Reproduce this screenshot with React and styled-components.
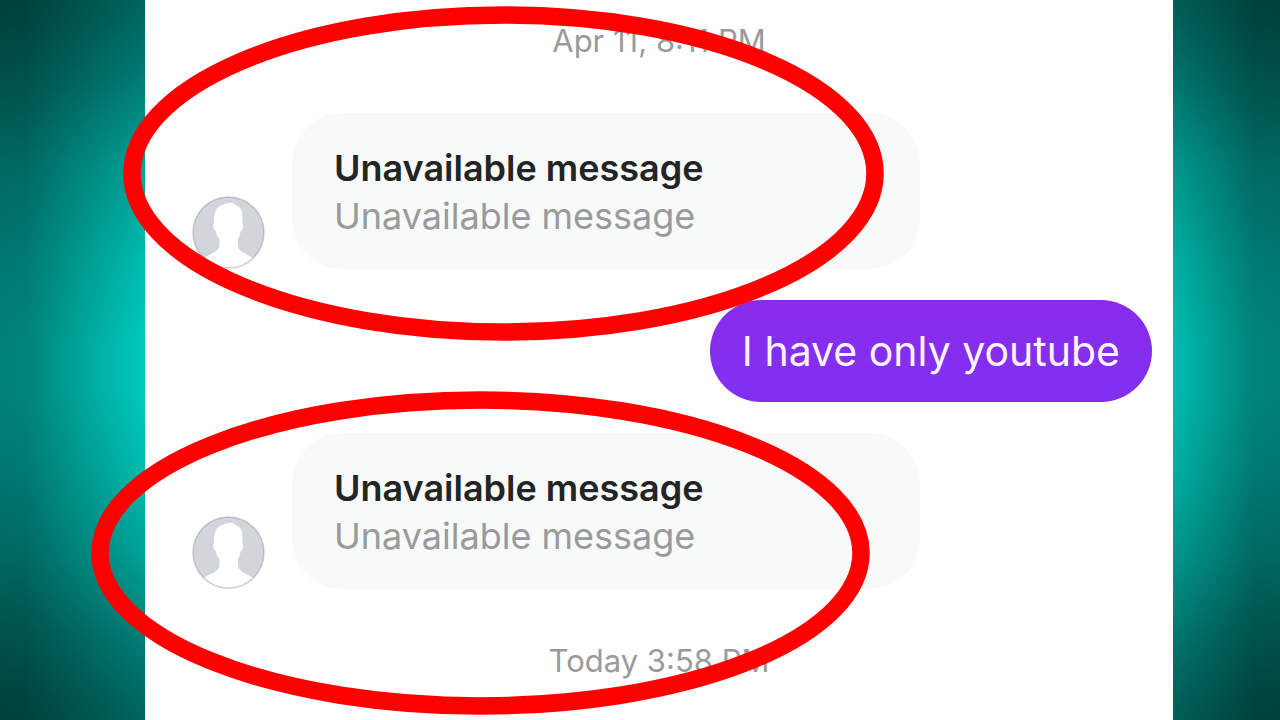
import React from "react";
import styled, { createGlobalStyle } from "styled-components";

const GlobalStyle = createGlobalStyle`
* {
  box-sizing: border-box;
}
body {
  margin: 0;
  font-family: Inter, "Noto Sans", sans-serif;
}
`
const Page = styled.div`
position: relative;
min-height: 100vh;
overflow: hidden;
display: grid;
grid-template-columns: 145fr 1028fr 107fr;
background:
  linear-gradient(to bottom,
    rgba(0,0,0,0.5) 0%,
    rgba(0,0,0,0.48) 3%,
    rgba(0,0,0,0.37) 12%,
    rgba(0,0,0,0.2) 23%,
    rgba(0,0,0,0.07) 36%,
    rgba(0,0,0,0) 48%,
    rgba(0,0,0,0) 54%,
    rgba(0,0,0,0.07) 65%,
    rgba(0,0,0,0.2) 77%,
    rgba(0,0,0,0.37) 88%,
    rgba(0,0,0,0.48) 97%,
    rgba(0,0,0,0.5) 100%),
  linear-gradient(to right,
    rgba(0,0,0,0.38) 0%,
    rgba(0,0,0,0.37) 2%,
    rgba(0,0,0,0) 12%,
    rgba(0,0,0,0) 88%,
    rgba(0,0,0,0.11) 92%,
    rgba(0,0,0,0.37) 98%,
    rgba(0,0,0,0.38) 100%),
  #00d0c2;
`
const Chat = styled.main`
grid-column: 2;
display: flex;
flex-direction: column;
gap: 31px;
padding: 21px 21px 0 47px;
background-color: white;
`
const Time = styled.time`
align-self: center;
padding-right: 26px;
margin: ${props => props.$first ? "0 0 21px" : "21px 0 0"};
font-size: 31px;
line-height: 40px;
color: #9a9a9a;
`
const Row = styled.div`
display: flex;
align-items: flex-end;
justify-content: ${props => props.$mine ? "flex-end" : "flex-start"};
gap: 27px;
`
const Avatar = styled.svg`
flex: none;
width: 73px;
height: 73px;
`
const Card = styled.div`
flex: 0 1 628px;
padding: 31px 42px 29px;
border-radius: 50px;
background-color: #f8faf9;
font-size: 36px;
line-height: 48px;
`
const Title = styled.div`
font-weight: 600;
color: #222524;
`
const Preview = styled.div`
color: #999b9a;
`
const Bubble = styled.div`
padding: 24px 32px;
border-radius: 51px;
background: linear-gradient(#8a2beb, #8030f1);
font-size: 41px;
line-height: 54px;
color: #fbf3ff;
`
const Marks = styled.svg`
position: absolute;
top: 0;
left: 0;
width: 100%;
height: 100%;
pointer-events: none;
`

const Person = () => (
  <Avatar viewBox="0 0 74 74" aria-hidden="true">
    <circle cx="37" cy="37" r="36" fill="#d2d5da" />
    <path
      fill="white"
      d="M37 7C40 6.500 42 7 44 9C49 10.500 51.500 15 51 21V28C52.500 28.500 52 33 50.500 34.500C50 35 49.500 35 49 37C48.500 40 47.500 42 46.500 44V50C46.500 56 54 58 62.500 63A36 36 0 0 1 11.500 63C20 58 28 56 28 50V44C26.500 42 25 40 24.500 37C24 35 23.500 35 23 34.500C21.500 33 21 28.500 22.500 28C21.500 17 24 8.500 37 7Z"
    />
    <circle cx="37" cy="37" r="36" fill="none" stroke="#000a1e" strokeOpacity="0.18" strokeWidth="1.5" />
  </Avatar>
)

const Unavailable = () => (
  <Row>
    <Person />
    <Card>
      <Title>Unavailable message</Title>
      <Preview>Unavailable message</Preview>
    </Card>
  </Row>
)

const App = () => {
  return (
    <>
      <GlobalStyle />
      <Page>
        <Chat>
          <Time $first>Apr 11, 8:11 PM</Time>
          <Unavailable />
          <Row $mine>
            <Bubble>I have only youtube</Bubble>
          </Row>
          <Unavailable />
          <Time>Today 3:58 PM</Time>
        </Chat>
        <Marks viewBox="0 0 1280 720" fill="none" stroke="#ff0000" strokeWidth="17.5" aria-hidden="true">
          <ellipse cx="503.500" cy="173.500" rx="371.500" ry="158.500" />
          <ellipse cx="480.500" cy="553" rx="380.500" ry="153" />
        </Marks>
      </Page>
    </>
  )
}
export default App;
